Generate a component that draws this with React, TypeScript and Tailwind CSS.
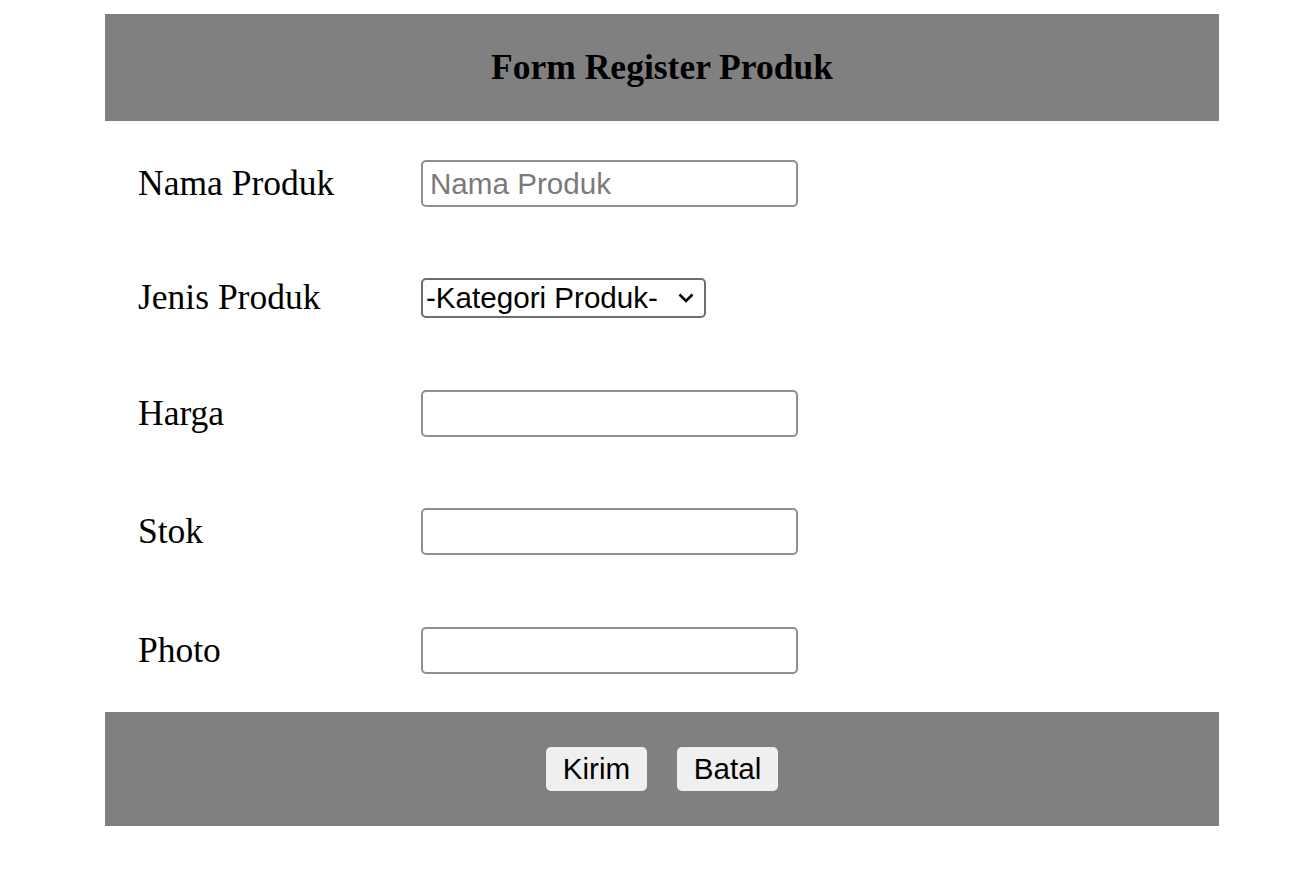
import React from 'react';

const fields = [
    { label: 'Harga', mt: 'mt-[72px]' },
    { label: 'Stok', mt: 'mt-[71px]' },
    { label: 'Photo', mt: 'mt-[72px]' },
];

function TextBox({ placeholder }: { placeholder?: string }) {
    return (
        <input
            type="text"
            placeholder={placeholder}
            className="w-[377px] h-[47px] px-[7px] border-2 border-[#8f8f8f] rounded-[5px] bg-white text-[29.6px] text-black placeholder:text-[#7a7a7a] outline-none font-['Liberation_Sans',Arial,sans-serif]"
        />
    );
}

export default function App() {
    return (
        <div className="min-h-[873px] bg-white pt-[14px] pl-[105px]">
            <div className="w-[1114px]">
                {/* header */}
                <div className="h-[107px] bg-[#808080] flex items-center justify-center">
                    <h3 className="text-[35.5px] font-bold text-black font-['Liberation_Serif','Times_New_Roman',serif]">Form Register Produk</h3>
                </div>

                {/* form rows */}
                <div className="pt-[39px] pb-[38px] font-['Liberation_Serif','Times_New_Roman',serif] text-[35.5px] text-black">
                    <div className="flex items-center h-[47px]">
                        <label className="w-[316px] pl-[33px] shrink-0">Nama Produk</label>
                        <TextBox placeholder="Nama Produk" />
                    </div>

                    <div className="flex items-center h-[40px] mt-[71px]">
                        <label className="w-[316px] pl-[33px] shrink-0">Jenis Produk</label>
                        <div className="relative h-[40px]">
                            <select className="block appearance-none w-[285px] h-[40px] py-0 pl-[3px] pr-[40px] border-2 border-[#6e6e6e] rounded-[5px] bg-white text-[29.6px] leading-[36px] text-black outline-none font-['Liberation_Sans',Arial,sans-serif]">
                                <option>-Kategori Produk-</option>
                            </select>
                            <svg className="absolute right-[12px] top-[15px] pointer-events-none" width="16" height="11" viewBox="0 0 16 11" fill="none">
                                <path d="M1.5 1.5 L8 8 L14.5 1.5" stroke="#000" strokeWidth="2.6" />
                            </svg>
                        </div>
                    </div>

                    {fields.map((f) => (
                        <div key={f.label} className={`flex items-center h-[47px] ${f.mt}`}>
                            <label className="w-[316px] pl-[33px] shrink-0">{f.label}</label>
                            <TextBox />
                        </div>
                    ))}
                </div>

                {/* footer */}
                <div className="h-[114px] bg-[#808080] flex items-center justify-center gap-[30px] font-['Liberation_Sans',Arial,sans-serif]">
                    <button className="w-[101px] h-[44px] bg-[#efefef] rounded-[5px] text-[29.6px] text-black">Kirim</button>
                    <button className="w-[101px] h-[44px] bg-[#efefef] rounded-[5px] text-[29.6px] text-black">Batal</button>
                </div>
            </div>
        </div>
    );
}
